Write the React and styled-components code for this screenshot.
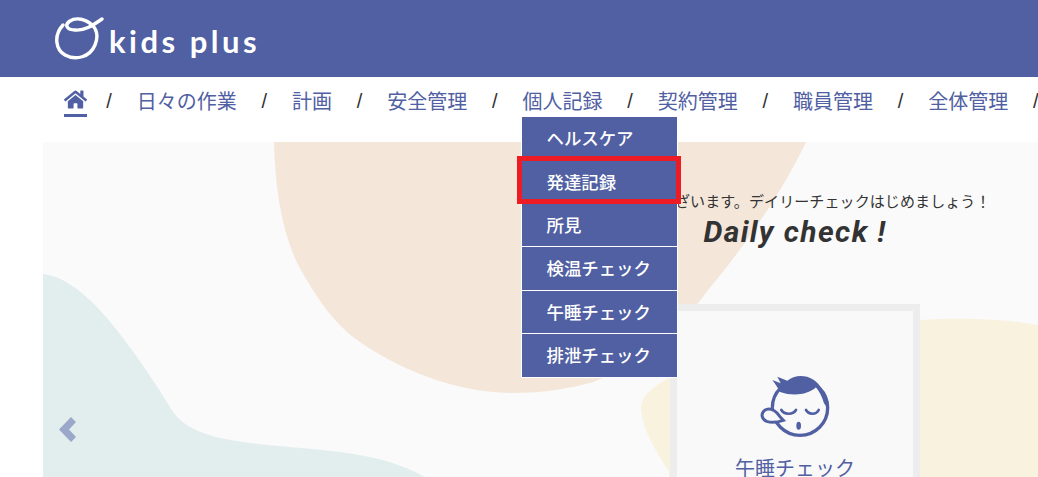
import React from 'react';
import styled, { createGlobalStyle } from 'styled-components';
import { FaHome } from 'react-icons/fa';

const JP = `"Noto Sans CJK JP", "Noto Sans", sans-serif`;
const BRAND = '#5060a2';

const GlobalStyle = createGlobalStyle`
  html, body {
    margin: 0;
    padding: 0;
    height: 477px;
    overflow: hidden;
    background: #fff;
    font-family: ${JP};
  }
`;

const Page = styled.div`
  width: 1038px;
  height: 477px;
  overflow: hidden;
`;

const Header = styled.header`
  display: flex;
  align-items: center;
  gap: 4px;
  height: 77px;
  padding-left: 55px;
  background: ${BRAND};
`;

const LogoText = styled.span`
  color: #fff;
  font-family: Lato, sans-serif;
  font-size: 31px;
  font-weight: 700;
  letter-spacing: 3.5px;
  line-height: 1;
  margin-top: 6px;
`;

const Nav = styled.nav`
  display: flex;
  align-items: center;
  gap: 24.85px;
  height: 65px;
  padding: 0 0 17px 64px;
  box-sizing: border-box;
  white-space: nowrap;
`;

const HomeLink = styled.a`
  display: flex;
  color: ${BRAND};
  font-size: 23px;
  height: 26px;
  width: 23px;
  margin: 3px -5.5px 0 0;
  align-items: flex-start;
  justify-content: center;
  border-bottom: 3px solid ${BRAND};
`;

const Slash = styled.span`
  width: 6px;
  color: #333;
  font-family: "Liberation Sans", sans-serif;
  font-size: 20px;
  text-align: center;
`;

const NavItem = styled.a`
  position: relative;
  color: ${BRAND};
  font-size: 20px;
  line-height: 30px;
`;

const Menu = styled.ul`
  position: absolute;
  z-index: 3;
  top: 31px;
  left: -1px;
  width: 155px;
  margin: 0;
  padding: 0;
  list-style: none;
  outline: 1px solid #fff;
`;

const MenuItem = styled.li`
  position: relative;
  display: flex;
  align-items: center;
  box-sizing: border-box;
  height: 43.4px;
  padding-left: 25px;
  background: ${BRAND};
  border-bottom: 1px solid ${({ $last }) => ($last ? BRAND : '#fff')};
  color: #fff;
  font-size: 17.4px;
  font-weight: 500;
`;

const Callout = styled.span`
  position: absolute;
  top: -4px;
  left: -5px;
  width: 164px;
  height: 48px;
  box-sizing: border-box;
  border: 5px solid #ed1c24;
`;

const Stage = styled.main`
  position: relative;
  margin-left: 43px;
  width: 1504px;
  height: 335px;
  overflow: hidden;
  background: #fafafa;
`;

const Blobs = styled.svg`
  position: absolute;
  top: 0;
  left: 0;
`;

const PrevArrow = styled.svg`
  position: absolute;
  top: 275px;
  left: 16px;
`;

const Content = styled.div`
  position: relative;
  display: flex;
  flex-direction: column;
  align-items: center;
  padding-top: 48px;
`;

const Greeting = styled.p`
  margin: 0;
  color: #333;
  font-size: 15px;
  line-height: 22px;
  letter-spacing: 0.1px;
`;

const Title = styled.h1`
  margin: 0;
  color: #333;
  font-family: Roboto, sans-serif;
  font-size: 30px;
  font-style: italic;
  font-weight: 700;
  line-height: 40px;
  letter-spacing: 1.4px;
`;

const CheckCard = styled.a`
  display: flex;
  flex-direction: column;
  align-items: center;
  box-sizing: border-box;
  width: 250px;
  height: 200px;
  margin-top: 52px;
  padding-top: 49px;
  border: 7px solid #ededed;
  background: #f9f9f9;
  color: ${BRAND};
`;

const CardLabel = styled.span`
  margin-top: 3px;
  font-size: 20px;
  line-height: 30px;
`;

const Logo = () => (
  <svg width="50" height="46" viewBox="55 18 50 46" fill="none">
    <path
      d="M63 27 C53 38 56 52 65 57 C76 63 90 59 95 47 C99 38 96 30 92 27 C86 21 76 19 70 23 C64 27 67 32 75 32 C84 33 92 28 102 21"
      stroke="#fff"
      strokeWidth="3.4"
      strokeLinecap="round"
    />
  </svg>
);

const SleepFace = () => (
  <svg width="100" height="90" viewBox="15 0 300 270" fill="none" stroke={BRAND}>
    <circle cx="180" cy="143" r="83" strokeWidth="10" />
    <path
      d="M97 60 L122 70 L112 50 L142 62 C170 38 225 42 248 92 C258 110 264 125 263 145 L252 130 C246 110 238 95 228 82 C205 104 160 110 120 96 C114 84 106 72 97 60 Z"
      fill={BRAND}
      stroke="none"
    />
    <path d="M130 181 C112 187 92 188 80 184 C64 178 62 160 74 151 C86 143 102 148 112 160 C118 168 124 175 130 181 Z" strokeWidth="9" fill="#f9f9f9" />
    <path d="M124 150 C132 164 158 166 168 150 M198 150 C206 164 228 166 236 150" strokeWidth="8" strokeLinecap="round" />
    <ellipse cx="176" cy="197" rx="7" ry="12" fill={BRAND} stroke="none" />
  </svg>
);

const personalMenu = ['ヘルスケア', '発達記録', '所見', '検温チェック', '午睡チェック', '排泄チェック'];
const navItems = ['日々の作業', '計画', '安全管理', '個人記録', '契約管理', '職員管理', '全体管理'];

const App = () => {
  return (
    <Page>
      <GlobalStyle />
      <Header>
        <Logo />
        <LogoText>kids plus</LogoText>
      </Header>
      <Nav>
        <HomeLink>
          <FaHome />
        </HomeLink>
        {navItems.map((item) => (
          <React.Fragment key={item}>
            <Slash>/</Slash>
            <NavItem>
              {item}
              {item === '個人記録' && (
                <Menu>
                  {personalMenu.map((entry, i) => (
                    <MenuItem key={entry} $last={i === personalMenu.length - 1}>
                      {entry}
                      {entry === '発達記録' && <Callout />}
                    </MenuItem>
                  ))}
                </Menu>
              )}
            </NavItem>
          </React.Fragment>
        ))}
        <Slash>/</Slash>
      </Nav>
      <Stage>
        <Blobs width="995" height="335" viewBox="43 142 995 335">
          <path
            d="M274 142 C275 190 282 230 297 263 C316 297 330 318 353 337 C400 372 460 393 513 393 C545 393 570 388 590 383 C630 370 680 330 708 290 C740 252 780 197 806 142 Z"
            fill="#f5e6da"
          />
          <path
            d="M43 274 C62 276 80 290 97 307 C125 337 150 375 170 407 C178 422 195 433 225 439 C265 447 320 447 365 456 C395 462 412 470 425 477 L43 477 Z"
            fill="#e2eeed"
          />
          <path
            d="M669 378 C650 388 640 398 641 410 C643 430 655 450 669 472 L669 477 L1038 477 L1038 325 C1000 318 955 318 920 320 Z"
            fill="#f8f2df"
          />
        </Blobs>
        <PrevArrow width="17" height="25" viewBox="0 0 17 25">
          <polygon points="0,12.5 12,0 17,5 10,12.5 17,20 12,25" fill="#9ba8c9" />
        </PrevArrow>
        <Content>
          <Greeting>おはようございます。デイリーチェックはじめましょう！</Greeting>
          <Title>Daily check !</Title>
          <CheckCard>
            <SleepFace />
            <CardLabel>午睡チェック</CardLabel>
          </CheckCard>
        </Content>
      </Stage>
    </Page>
  );
};

export default App;
